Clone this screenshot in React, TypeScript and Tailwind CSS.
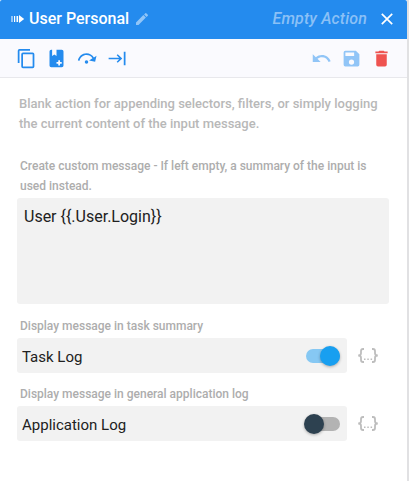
import React from 'react';

function Icon({ d, className = '', size = 21 }: { d: string; className?: string; size?: number }) {
  return (
    <svg viewBox="0 0 24 24" width={size} height={size} fill="currentColor" className={`shrink-0 ${className}`}>
      <path d={d} />
    </svg>
  );
}

const COPY = 'M19 21H8V7h11m0-2H8a2 2 0 0 0-2 2v14a2 2 0 0 0 2 2h11a2 2 0 0 0 2-2V7a2 2 0 0 0-2-2m-3-4H4a2 2 0 0 0-2 2v14h2V3h12V1z';
const BOOK_PLUS = 'M6 2h1v7l2.5-1.5L12 9V2h6a2 2 0 0 1 2 2v16a2 2 0 0 1-2 2H6a2 2 0 0 1-2-2V4a2 2 0 0 1 2-2m8 18h2v-2h2v-2h-2v-2h-2v2h-2v2h2z';
const STEP_OVER = 'M12 14a2 2 0 1 1 0 4a2 2 0 0 1 0-4m11.46-5.14l-1.59 6.89L15 14.16l3.8-2.38A7.97 7.97 0 0 0 12 8c-3.95 0-7.23 2.86-7.88 6.63l-1.97-.35C2.96 9.58 7.06 6 12 6c3.58 0 6.73 1.89 8.5 4.72z';
const COLLAPSE = 'M20.3 4.2h2v15.6h-2zM3 11.1h12L12.2 8.4l1.2-1.2L18.6 12l-5.2 4.8l-1.2-1.2L15 12.9H3z';
const UNDO = 'M12.5 8c-2.65 0-5.05 1-6.9 2.6L2 7v9h9l-3.62-3.62c1.39-1.16 3.16-1.88 5.12-1.88c3.54 0 6.55 2.31 7.6 5.5l2.37-.78C21.08 11.03 17.15 8 12.5 8';
const SAVE = 'M15 9H5V5h10m-3 14a3 3 0 1 1 0-6a3 3 0 0 1 0 6m5-16H5a2 2 0 0 0-2 2v14a2 2 0 0 0 2 2h14a2 2 0 0 0 2-2V7z';
const TRASH = 'M19 4h-3.5l-1-1h-5l-1 1H5v2h14M6 19a2 2 0 0 0 2 2h8a2 2 0 0 0 2-2V7H6z';
const PENCIL = 'M20.71 7.04a1 1 0 0 0 0-1.41l-2.34-2.34a1 1 0 0 0-1.41 0l-1.84 1.83l3.75 3.75zM3 17.25V21h3.75L17.81 9.93l-3.75-3.75z';

function Toggle({ on = false }: { on?: boolean }) {
  return (
    <div className={`flex h-[14px] w-[34px] items-center rounded-full ${on ? 'justify-end bg-[#86c8f3]' : 'bg-[#b3b3b3]'}`}>
      <div className={`h-5 w-5 shrink-0 rounded-full shadow-[0_1px_3px_rgba(0,0,0,0.3)] ${on ? 'bg-[#189ff0]' : '-ml-0.5 bg-[#2d4150]'}`} />
    </div>
  );
}

function BraceIcon() {
  return (
    <svg width="22" height="16" viewBox="0 0 22 16" fill="none" stroke="#bdbdbd" strokeWidth="1.8" className="ml-[10px]">
      <path d="M7 1H6Q4 1 4 3V5.3Q4 7.5 1.2 7.5Q4 7.5 4 9.7V12Q4 14 6 14H7M15 1H16Q18 1 18 3V5.3Q18 7.5 20.8 7.5Q18 7.5 18 9.7V12Q18 14 16 14H15" />
      <path d="M7 11.2H8.5M10.3 11.2H11.8M13.6 11.2H15.1" strokeWidth="1.4" />
    </svg>
  );
}

function LogRow({ label, name, on }: { label: string; name: string; on?: boolean }) {
  return (
    <div className="h-[68px]">
      <div className="pl-[3px] text-[12px] leading-[20px] font-medium text-[#adadad]">{label}</div>
      <div className="mt-[2px] flex items-center">
        <div className="flex h-[35px] w-[330px] items-center justify-between rounded-[3px] bg-[#f2f2f2] pr-[7px] pl-[5px]">
          <span className="pt-[3px] text-[15px] leading-[20px] text-[#212121]">{name}</span>
          <Toggle on={on} />
        </div>
        <BraceIcon />
      </div>
    </div>
  );
}

export default function App() {
  return (
    <div className="h-[481px] w-[409px] overflow-hidden border-r-2 border-[#e1e1e3] bg-white font-['Roboto',sans-serif]">
      <header className="flex h-[39px] items-center rounded-t-[2px] bg-[#248bee] pb-[2px] text-white">
        <svg width="14" height="10" viewBox="0 0 14 10" fill="white" className="ml-[11px] shrink-0">
          <path d="M0.5 2h1v6h-1zM3 2h1.2v6H3zM5.5 2h1.6v6H5.5zM8 1L13.2 5L8 9z" />
        </svg>
        <h1 className="ml-[4px] text-[16px] leading-[20px] font-medium">User Personal</h1>
        <Icon d={PENCIL} size={16} className="mt-[1px] ml-[5px] text-[#91c5f7]" />
        <div className="ml-auto text-[16px] leading-[20px] font-medium tracking-[0.15px] text-[#8ac0f6] italic">Empty Action</div>
        <svg width="12" height="12" viewBox="0 0 12 12" className="mr-[14px] ml-[14px]" stroke="white" strokeWidth="1.7">
          <path d="M0.8 0.8L11.2 11.2M11.2 0.8L0.8 11.2" />
        </svg>
      </header>
      <div className="flex h-[39px] items-center justify-between border-b border-[#e8e8ec] bg-[#fafafe] pr-[15.5px] pl-[16px] text-[#248bee]">
        <div className="flex gap-[9px]">
          <Icon d={COPY} />
          <Icon d={BOOK_PLUS} />
          <Icon d={STEP_OVER} />
          <Icon d={COLLAPSE} />
        </div>
        <div className="flex gap-[9px]">
          <Icon d={UNDO} className="text-[#91c5f7]" />
          <Icon d={SAVE} className="text-[#91c5f7]" />
          <Icon d={TRASH} className="text-[#ef5350]" />
        </div>
      </div>
      <main className="px-[17px] pt-[16px]">
        <p className="pl-[2px] text-[13px] leading-[20px] font-medium text-[#b8b8b8]">
          Blank action for appending selectors, filters, or simply logging<br />the current content of the input message.
        </p>
        <div className="mt-[22px] pl-[3px] text-[12px] leading-[20px] font-medium text-[#adadad]">
          Create custom message - If left empty, a summary of the input is<br />used instead.
        </div>
        <div className="mt-[2px] mb-[12px] h-[106px] w-[372px] rounded-[3px] bg-[#f2f2f2] px-[7px] pt-[9px] text-[16px] leading-[20px] text-[#212121]">
          {'User {{.User.Login}}'}
        </div>
        <LogRow label="Display message in task summary" name="Task Log" on />
        <LogRow label="Display message in general application log" name="Application Log" />
      </main>
    </div>
  );
}
